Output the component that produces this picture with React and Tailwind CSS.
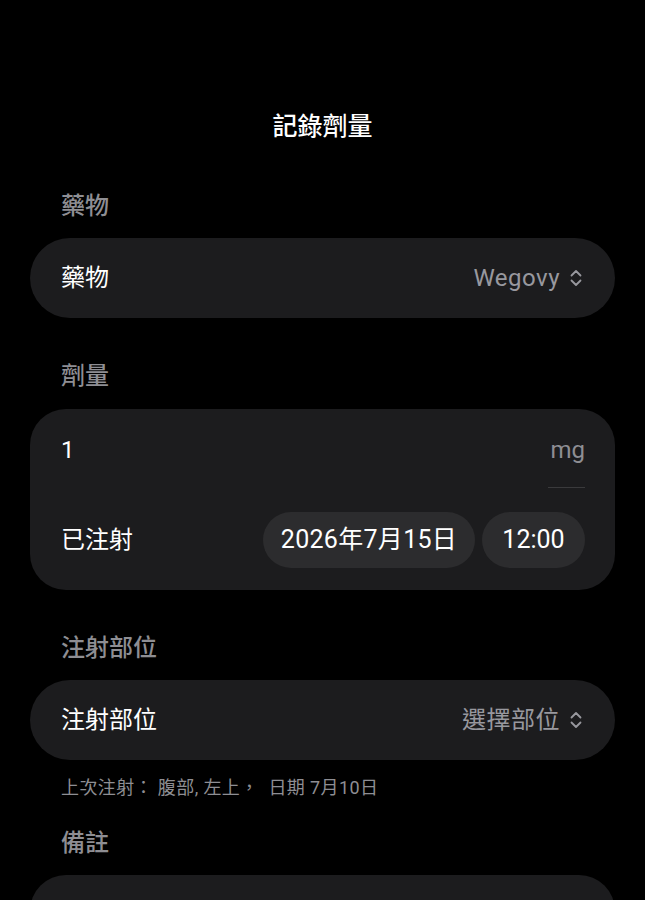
import React from "react";

const font = { fontFamily: 'Roboto, "Noto Sans CJK TC", "Noto Sans", sans-serif' };

function Chevrons() {
  return (
    <svg width="14" height="20" viewBox="0 0 14 20" fill="none" stroke="currentColor" strokeWidth="1.8" strokeLinecap="round" strokeLinejoin="round">
      <path d="M2.5 7.5 L7 3 L11.5 7.5" />
      <path d="M2.5 12.5 L7 17 L11.5 12.5" />
    </svg>
  );
}

function Label({ children }) {
  return <div className="px-[61px] text-[24px] leading-[34px] font-medium text-[#8e8e93]">{children}</div>;
}

function SelectRow({ label, value }) {
  return (
    <div className="mx-[30px] h-[80px] rounded-full bg-[#1c1c1e] flex items-center justify-between pl-[31px] pr-[32px]">
      <span className="text-[24px] leading-[34px] text-white">{label}</span>
      <span className="flex items-center gap-[9px] text-[24px] leading-[34px] tracking-[0.5px] text-[#98989e]">
        {value}
        <Chevrons />
      </span>
    </div>
  );
}

export default function App() {
  return (
    <div className="min-h-[900px] bg-black overflow-hidden" style={font}>
      <div className="pt-[110px] text-center text-[25px] leading-[34px] font-medium text-white">記錄劑量</div>

      <div className="mt-[45px]"><Label>藥物</Label></div>
      <div className="mt-[15px]"><SelectRow label="藥物" value="Wegovy" /></div>

      <div className="mt-[41px]"><Label>劑量</Label></div>
      <div className="mt-[16px] mx-[30px] rounded-[36px] bg-[#1c1c1e] pl-[31px] pr-[30px] pt-[24px] pb-[22px]">
        <div className="flex items-start justify-between">
          <span className="text-[24px] leading-[34px] text-white">1</span>
          <div className="flex flex-col items-end w-[37px]">
            <span className="text-[24px] leading-[34px] text-[#8e8e93]">mg</span>
            <div className="mt-[20px] h-px w-[37px] bg-[#3a3a3c]" />
          </div>
        </div>
        <div className="mt-[24px] flex items-center justify-between">
          <span className="text-[24px] leading-[34px] text-white">已注射</span>
          <div className="flex gap-[7px]">
            <div className="h-[56px] w-[212px] rounded-full bg-[#2c2c2e] flex items-center justify-center text-[25px] tracking-[0.3px] text-white">2026年7月15日</div>
            <div className="h-[56px] w-[103px] rounded-full bg-[#2c2c2e] flex items-center justify-center text-[25px] text-white">12:00</div>
          </div>
        </div>
      </div>

      <div className="mt-[41px]"><Label>注射部位</Label></div>
      <div className="mt-[15px]"><SelectRow label="注射部位" value="選擇部位" /></div>

      <div className="mt-[16px] px-[61px] text-[18px] leading-[24px] tracking-[0.4px] text-[#8e8e93]">上次注射：&nbsp;腹部, 左上，&nbsp;&nbsp;日期 7月10日</div>

      <div className="mt-[26px]"><Label>備註</Label></div>
      <div className="mt-[15px] mx-[30px] h-[80px] rounded-[36px] bg-[#1c1c1e]" />
    </div>
  );
}
